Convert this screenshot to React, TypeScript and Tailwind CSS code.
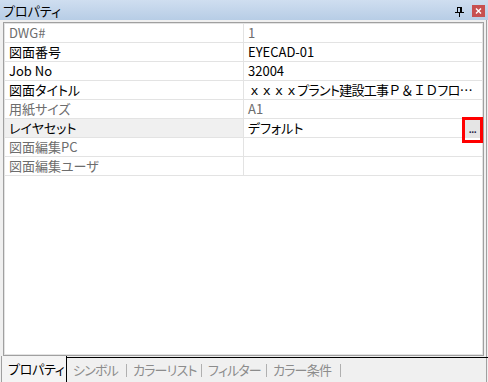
import React from "react";

type Row = { name: React.ReactNode; value?: React.ReactNode; dim?: boolean; hl?: boolean; btn?: boolean };

const P = ({ children }: { children: React.ReactNode }) => (
  <span className="[font-feature-settings:'palt']">{children}</span>
);

export default function App() {
  const rows: Row[] = [
    { name: "DWG#", value: "1", dim: true },
    { name: "図面番号", value: "EYECAD-01" },
    { name: "Job No", value: "32004" },
    {
      name: <P>図面タイトル</P>,
      value: (
        <span className="whitespace-nowrap tracking-[-0.7px]">
          <span>ｘｘｘｘ</span>
          <P>プラント</P>
          <span>建設工事Ｐ＆ＩＤ</span>
          <P>フロ</P>
          <span className="tracking-[-1px]">…</span>
        </span>
      ),
    },
    { name: <P>用紙サイズ</P>, value: "A1", dim: true },
    { name: <P>レイヤセット</P>, value: <P>デフォルト</P>, hl: true, btn: true },
    { name: "図面編集PC", dim: true },
    { name: <P>図面編集ユーザ</P>, dim: true },
  ];

  const tabs = [
    { label: "シンボル", w: "w-[60px]" },
    { label: "カラーリスト", w: "w-[75px]" },
    { label: "フィルター", w: "w-[65px]" },
    { label: "カラー条件", w: "w-[74px]" },
  ];

  return (
    <div className="w-[488px] h-[382px] bg-[#f0f0f0] flex flex-col relative overflow-hidden font-['Noto_Sans_CJK_JP',sans-serif] text-[13px] text-black shadow-[inset_-1px_0_0_#f0f0f0,inset_-2px_0_0_#a0a0a0]">
      {/* title bar */}
      <div className="h-[20px] bg-gradient-to-b from-[#cfdef0] to-[#b7cde6] flex items-center pl-[3px] pr-[3px]">
        <span className="[font-feature-settings:'palt'] leading-none">プロパティ</span>
        <div className="ml-auto flex items-center">
          <svg width="9" height="10" viewBox="0 0 9 10" className="mr-[8px] mt-[3px]">
            <rect x="2.5" y="0.5" width="3" height="5" fill="none" stroke="#000" />
            <rect x="5" y="0" width="2" height="6" fill="#000" />
            <rect x="0" y="5" width="9" height="1" fill="#000" />
            <rect x="4" y="6" width="1" height="4" fill="#000" />
          </svg>
          <div className="w-[13px] h-[12px] bg-[#c75050] flex items-center justify-center mt-[1px]">
            <svg width="7" height="6" viewBox="0 0 7 6">
              <path d="M1 0.5 L6 5.5 M6 0.5 L1 5.5" stroke="#fff" strokeWidth="1.4" />
            </svg>
          </div>
        </div>
      </div>

      {/* property grid frame */}
      <div className="mt-[2px] ml-[3px] w-[481px] h-[334px] border border-[#a0a0a0] bg-white">
        <div className="h-full border border-[#e3e3e3] flex flex-col">
          {rows.map((r, i) => (
            <div key={i} className="flex h-[19px] shrink-0 border-b border-[#e3e3e3]">
              <div
                className={`w-[239px] shrink-0 border-r border-[#e3e3e3] pl-[4px] flex items-center whitespace-nowrap ${
                  r.hl ? "bg-[#f0f0f0]" : ""
                } ${r.dim ? "text-[#6d6d6d]" : "text-black"}`}
              >
                {r.name}
              </div>
              <div
                className={`flex-1 pl-[4px] flex items-center overflow-hidden ${
                  r.dim ? "text-[#6d6d6d]" : "text-black"
                }`}
              >
                {r.value}
                {r.btn && (
                  <div className="ml-auto mr-[2px] w-[15px] h-[18px] bg-[#e5e5e5] flex items-end justify-center pb-[3px]">
                    <span className="text-[9px] leading-none text-[#1a1a40] font-bold tracking-[-0.5px]">...</span>
                  </div>
                )}
              </div>
            </div>
          ))}
        </div>
      </div>

      {/* red annotation box */}
      <div className="absolute left-[462px] top-[117px] w-[21px] h-[26px] border-[3px] border-[#ff0000]" />

      {/* tab bar */}
      <div className="h-[26px] flex">
        <div className="ml-[1px] w-[66px] border-l border-[#a0a0a0] border-r border-r-black flex items-center pl-[6px] bg-[#f4f4f4]">
          <span className="[font-feature-settings:'palt'] text-black tracking-[-0.3px]">プロパティ</span>
        </div>
        <div className="flex-1 mt-[1px] border-t border-black flex items-center">
          {tabs.map((t) => (
            <div key={t.label} className={`${t.w} h-full flex items-center`}>
              <span className="pl-[6px] [font-feature-settings:'palt'] text-[#8c8c8c] whitespace-nowrap tracking-[-0.8px]">{t.label}</span>
              <div className="ml-auto w-[1px] h-[13px] bg-[#b0b0b0]" />
            </div>
          ))}
        </div>
      </div>
    </div>
  );
}
